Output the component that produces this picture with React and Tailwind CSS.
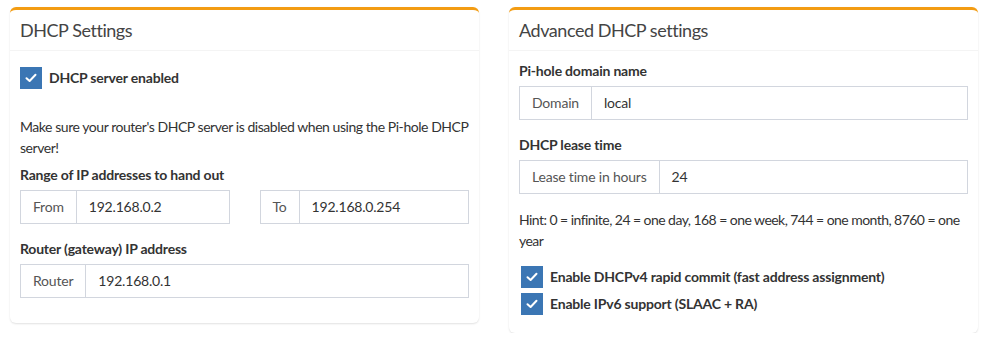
import React from "react";

function Check() {
  return (
    <span className="flex h-[22px] w-[22px] shrink-0 items-center justify-center bg-[#3b76b4]">
      <svg width="12" height="10" viewBox="0 0 12 10" fill="none">
        <path d="M1.5 5.2 L4.6 8 L10.5 1.8" stroke="white" strokeWidth="2" strokeLinecap="round" strokeLinejoin="round" />
      </svg>
    </span>
  );
}

function CheckRow({ label, className = "" }) {
  return (
    <div className={"flex items-center gap-[7px] " + className}>
      <Check />
      <span className="font-bold text-[#333]">{label}</span>
    </div>
  );
}

function InputGroup({ addon, value }) {
  return (
    <div className="flex h-[34px] border border-[#d2d6de] text-[#555]">
      <span className="flex items-center border-r border-[#d2d6de] px-3">{addon}</span>
      <span className="flex items-center px-3 text-[#333]">{value}</span>
    </div>
  );
}

function Field({ label, children }) {
  return (
    <div className="mb-[15px]">
      <div className="mb-[5px] font-bold text-[#333]">{label}</div>
      {children}
    </div>
  );
}

function Card({ title, children }) {
  return (
    <div className="w-[470px] rounded-[6px] border-t-[3px] border-[#f39c12] bg-white shadow-[0_1px_2px_rgba(0,0,0,0.12)]">
      <div className="border-b border-[#f4f4f4] px-[10px] py-[10px]">
        <h3 className="text-[18px] leading-[20px] tracking-[-0.45px] text-[#444]">{title}</h3>
      </div>
      <div className="p-[10px]">{children}</div>
    </div>
  );
}

export default function App() {
  return (
    <div
      className="flex items-start gap-[30px] bg-white px-[10px] pt-[7px] text-[14px] leading-[20px] tracking-[-0.2px]"
      style={{ fontFamily: "Lato, 'Liberation Sans', sans-serif" }}
    >
      <Card title="DHCP Settings">
        <CheckRow label="DHCP server enabled" className="mt-[6px]" />
        <p className="mt-[27px] mb-[7px] whitespace-nowrap leading-[21px] tracking-[-0.45px] text-[#333]">
          Make sure your router's DHCP server is disabled when using the Pi-hole DHCP
          <br />
          server!
        </p>
        <Field label="Range of IP addresses to hand out">
          <div className="grid grid-cols-2 gap-[30px]">
            <InputGroup addon="From" value="192.168.0.2" />
            <InputGroup addon="To" value="192.168.0.254" />
          </div>
        </Field>
        <Field label="Router (gateway) IP address">
          <InputGroup addon="Router" value="192.168.0.1" />
        </Field>
      </Card>
      <Card title="Advanced DHCP settings">
        <Field label="Pi-hole domain name">
          <InputGroup addon="Domain" value="local" />
        </Field>
        <Field label="DHCP lease time">
          <InputGroup addon="Lease time in hours" value="24" />
        </Field>
        <p className="mb-[15px] whitespace-nowrap leading-[21px] tracking-[-0.55px] text-[#333]">
          Hint: 0 = infinite, 24 = one day, 168 = one week, 744 = one month, 8760 = one
          <br />
          year
        </p>
        <CheckRow label="Enable DHCPv4 rapid commit (fast address assignment)" className="pl-[2px]" />
        <CheckRow label="Enable IPv6 support (SLAAC + RA)" className="mt-[5px] mb-[8px] pl-[2px]" />
      </Card>
    </div>
  );
}
